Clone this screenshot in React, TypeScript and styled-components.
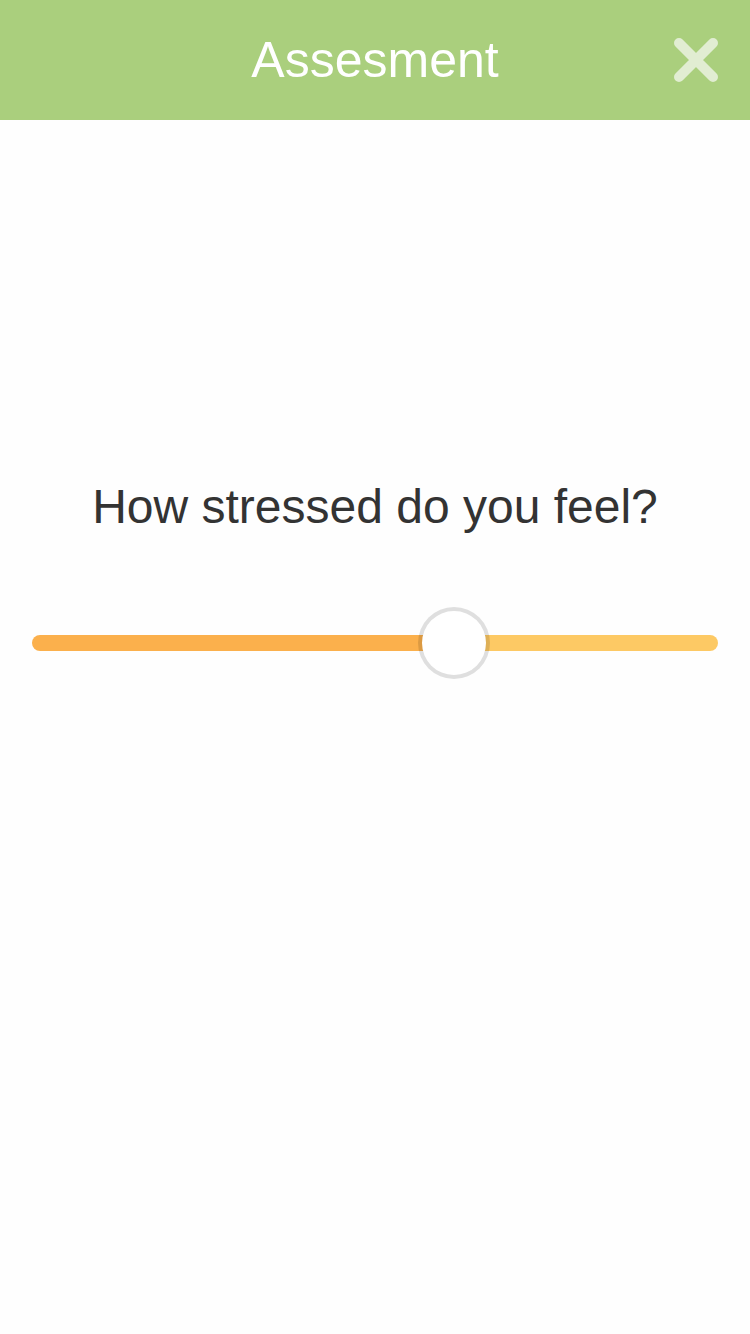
import React, { useState } from "react";
import styled, { createGlobalStyle } from "styled-components";

const GlobalStyle = createGlobalStyle`
  *, *::before, *::after { box-sizing: border-box; }
  body {
    margin: 0;
    background: #fefefe;
    font-family: "Liberation Sans", Arial, sans-serif;
    color: #333333;
  }
`;

const Screen = styled.div`
  display: flex;
  flex-direction: column;
  min-height: 100vh;
`;

const Header = styled.header`
  display: grid;
  grid-template-columns: 44px 1fr 44px;
  align-items: center;
  height: 120px;
  padding: 0 32px;
  background: #aacf7d;
`;

const Title = styled.h1`
  grid-column: 2;
  margin: 0;
  font-size: 50px;
  font-weight: 400;
  line-height: 60px;
  text-align: center;
  color: #ffffff;
`;

const CloseButton = styled.button`
  display: flex;
  width: 44px;
  height: 44px;
  padding: 0;
  border: 0;
  background: none;
  color: #e1edd2;
  cursor: pointer;
`;

const Main = styled.main`
  display: flex;
  flex: 1;
  flex-direction: column;
  justify-content: center;
  gap: 72px;
  padding: 0 32px 296px;
`;

const Question = styled.label`
  font-size: 48px;
  line-height: 56px;
  text-align: center;
`;

const Slider = styled.input<{ $percent: number }>`
  --fill: calc(36px + (100% - 72px) * ${(p) => p.$percent / 100});
  appearance: none;
  width: 100%;
  height: 72px;
  margin: 0;
  background: none;
  cursor: pointer;

  &::-webkit-slider-runnable-track {
    height: 16px;
    border-radius: 8px;
    background: linear-gradient(to right, #fbb04c var(--fill), #fdc964 var(--fill));
  }

  &::-webkit-slider-thumb {
    appearance: none;
    width: 72px;
    height: 72px;
    margin-top: -28px;
    border: 4px solid rgba(0, 0, 0, 0.12);
    border-radius: 50%;
    background: #ffffff;
    background-clip: padding-box;
  }
`;

export default function App() {
  const [stress, setStress] = useState(62.9);

  return (
    <Screen>
      <GlobalStyle />
      <Header>
        <Title>Assesment</Title>
        <CloseButton type="button" aria-label="Close">
          <svg width="44" height="44" viewBox="0 0 44 44" aria-hidden="true">
            <path d="M5 5L39 39M39 5L5 39" fill="none" stroke="currentColor" strokeWidth="10" strokeLinecap="round" />
          </svg>
        </CloseButton>
      </Header>
      <Main>
        <Question htmlFor="stress">How stressed do you feel?</Question>
        <Slider
          id="stress"
          type="range"
          min={0}
          max={100}
          step={0.1}
          value={stress}
          $percent={stress}
          onChange={(e) => setStress(Number(e.target.value))}
        />
      </Main>
    </Screen>
  );
}
